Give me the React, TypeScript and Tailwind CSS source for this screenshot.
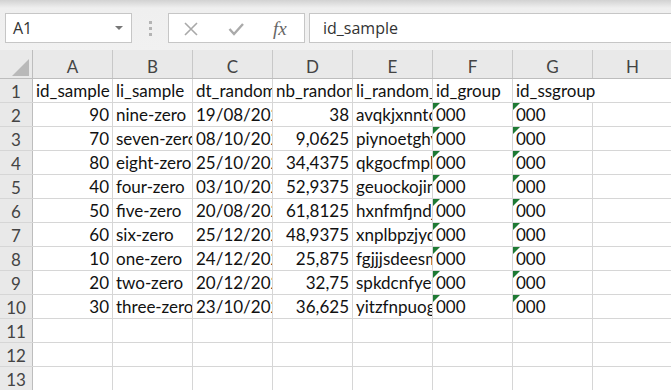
type Cell = { v: string; num?: boolean; flag?: boolean; spill?: boolean };

const COLS = ["A", "B", "C", "D", "E", "F", "G", "H"];

const RAW: [string, string, string, string, string][] = [
  ["90", "nine-zero", "19/08/2020", "38", "avqkjxnntcqw"],
  ["70", "seven-zero", "08/10/2020", "9,0625", "piynoetghyrm"],
  ["80", "eight-zero", "25/10/2020", "34,4375", "qkgocfmplzs"],
  ["40", "four-zero", "03/10/2020", "52,9375", "geuockojinwx"],
  ["50", "five-zero", "20/08/2020", "61,8125", "hxnfmfjndjtk"],
  ["60", "six-zero", "25/12/2020", "48,9375", "xnplbpzjydqv"],
  ["10", "one-zero", "24/12/2020", "25,875", "fgjjjsdeesmu"],
  ["20", "two-zero", "20/12/2020", "32,75", "spkdcnfyewlo"],
  ["30", "three-zero", "23/10/2020", "36,625", "yitzfnpuogha"],
];

const HEAD: Cell[] = [
  { v: "id_sample" },
  { v: "li_sample" },
  { v: "dt_random" },
  { v: "nb_random" },
  { v: "li_random_str" },
  { v: "id_group" },
  { v: "id_ssgroup", spill: true },
  { v: "" },
];

const ROWS: Cell[][] = [
  HEAD,
  ...RAW.map(([a, b, c, d, e]) => [
    { v: a, num: true },
    { v: b },
    { v: c },
    { v: d, num: true },
    { v: e },
    { v: "000", flag: true },
    { v: "000", flag: true },
    { v: "" },
  ]),
  ...[0, 1, 2].map(() => COLS.map(() => ({ v: "" }))),
];

const FONT = { fontFamily: "Lato, 'Liberation Sans', sans-serif" };

function Toolbar() {
  return (
    <div className="h-[50px] bg-gradient-to-b from-[#d2d2d2] via-[#efefef] via-[16%] to-[#f1f1f1]">
      <div className="flex items-center pt-[13px] pl-[5px]">
        <div className="flex h-[30px] w-[127px] items-center justify-between border border-[#c6c6c6] bg-white pl-[7px] pr-[8px]">
          <span className="text-[16px] text-[#333]" style={{ fontFamily: "'Open Sans', sans-serif" }}>
            A1
          </span>
          <span className="h-0 w-0 border-x-[4px] border-t-[4px] border-x-transparent border-t-[#777]" />
        </div>
        <div className="ml-[17px] flex flex-col gap-[3px]">
          <span className="h-[3px] w-[3px] bg-[#b4b4b4]" />
          <span className="h-[3px] w-[3px] bg-[#b4b4b4]" />
          <span className="h-[3px] w-[3px] bg-[#b4b4b4]" />
        </div>
        <div className="ml-[16px] flex h-[30px] w-[137px] items-center border border-[#c6c6c6] bg-white pl-[14px]">
          <svg width="16" height="16" viewBox="0 0 16 16" className="mt-[1px]">
            <path d="M2 2 L14 14 M14 2 L2 14" stroke="#a9a9a9" strokeWidth="1.6" fill="none" />
          </svg>
          <svg width="16" height="16" viewBox="0 0 16 16" className="ml-[29px] mt-[2px]">
            <path d="M1.5 8 L6 13 L15 3" stroke="#aaaaaa" strokeWidth="2.4" fill="none" />
          </svg>
          <span
            className="ml-[29px] text-[19px] italic leading-none text-[#666]"
            style={{ fontFamily: "'Liberation Serif', serif" }}
          >
            fx
          </span>
        </div>
        <div className="ml-[4px] flex h-[30px] flex-1 items-center border border-r-0 border-[#c6c6c6] bg-white pl-[13px]">
          <span className="text-[16px] text-[#333]" style={{ fontFamily: "'Open Sans', sans-serif" }}>
            id_sample
          </span>
        </div>
      </div>
    </div>
  );
}

function Grid() {
  return (
    <div className="flex flex-col bg-white" style={FONT}>
      <div className="flex h-[29px] border-b border-[#bdbdbd] bg-[#e9e9e9]">
        <div className="flex w-[33px] shrink-0 items-end justify-end border-r border-[#bdbdbd] pb-[2px] pr-[3px]">
          <span className="h-0 w-0 border-b-[17px] border-l-[17px] border-b-[#b9b9b9] border-l-transparent" />
        </div>
        {COLS.map((c) => (
          <div
            key={c}
            className="flex w-[80px] shrink-0 items-center justify-center border-r border-[#c8c8c8] pt-[5px] text-[17px] text-[#444]"
          >
            {c}
          </div>
        ))}
      </div>
      {ROWS.map((row, r) => (
        <div key={r} className="flex h-[24px] border-b border-[#d6d6d6]">
          <div className="flex w-[33px] shrink-0 items-center justify-center border-r border-[#bdbdbd] bg-[#e9e9e9] pt-[3px] text-[17px] text-[#444]">
            {r + 1}
          </div>
          {row.map((cell, i) => (
            <div
              key={i}
              className={
                "relative flex w-[80px] shrink-0 items-end whitespace-nowrap text-[17px] leading-[23px] text-[#111] " +
                (cell.spill ? "z-10 overflow-visible " : "overflow-hidden border-r border-[#d6d6d6] ") +
                (cell.num ? "justify-end pr-[3px]" : "pl-[3px]")
              }
            >
              {cell.flag && (
                <span className="absolute left-0 top-0 h-0 w-0 border-r-[7px] border-t-[7px] border-r-transparent border-t-[#1e7a34]" />
              )}
              {cell.v}
            </div>
          ))}
        </div>
      ))}
    </div>
  );
}

export default function App() {
  return (
    <div className="h-[390px] w-[671px] overflow-hidden bg-[#f1f1f1]">
      <Toolbar />
      <Grid />
    </div>
  );
}
